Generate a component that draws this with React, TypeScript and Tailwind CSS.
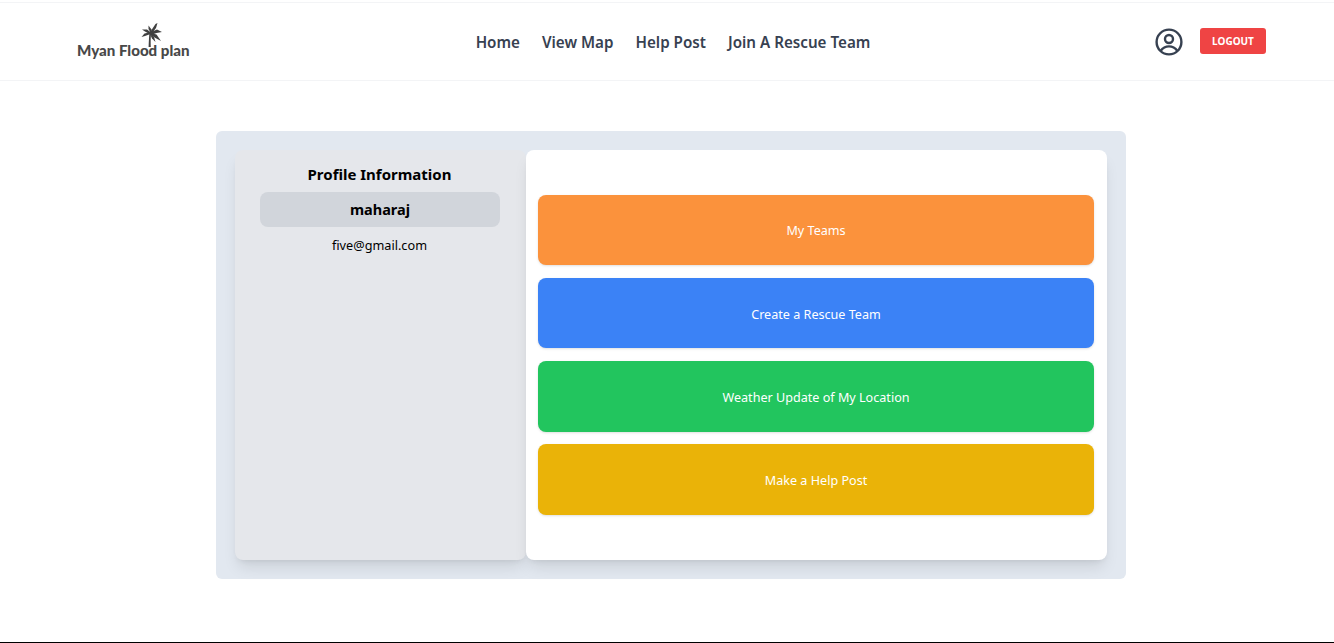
const font = { fontFamily: '"Noto Sans", "Open Sans", sans-serif' };

function Palm() {
  return (
    <svg viewBox="0 0 28 28" className="absolute left-[59px] top-[-17px] h-[28px] w-[28px]" fill="#404040">
      <path d="M12.6 25 C12.8 20 13 15 13.4 11 L15 11.5 C14.6 16 14.6 21 14.8 25 Z" />
      <path d="M13.5 11 L19.5 2 L21.5 1 L20 6 L15.5 12 Z" />
      <path d="M14 10.5 L21 7.5 L26 10 L20.5 11 L15 13 Z" />
      <path d="M14.5 11 L20.5 12.5 L25 19 L19.5 16 L14.5 13 Z" />
      <path d="M14 12 L18 15 L19.5 20 L16 16.5 Z" />
      <path d="M14.5 12 L9 14 L5.5 15 L8.5 11.5 L13 10.5 Z" />
      <path d="M14.5 12.5 L9 9.5 L6 7.5 L11 7.5 L15 10.5 Z" />
      <path d="M15 11.5 L12.5 7 L12.5 3.5 L15.5 7.5 Z" />
    </svg>
  );
}

function UserIcon() {
  return (
    <svg viewBox="0 0 28 28" className="h-[28px] w-[28px] text-[#374151]" fill="none" stroke="currentColor" strokeWidth="2.4">
      <circle cx="14" cy="14" r="12.4" />
      <circle cx="14" cy="11" r="4" />
      <path d="M5.6 23 C8 19.6 10.8 18.4 14 18.4 C17.2 18.4 20 19.6 22.4 23" />
    </svg>
  );
}

const actions = [
  { label: "My Teams", color: "bg-[#fb923c]", h: "h-[70px]", mb: "mb-[13px]", pt: "pt-[3px]" },
  { label: "Create a Rescue Team", color: "bg-[#3b82f6]", h: "h-[70px]", mb: "mb-[13px]", pt: "pt-[5px]" },
  { label: "Weather Update of My Location", color: "bg-[#22c55e]", h: "h-[71px]", mb: "mb-[12px]", pt: "pt-[3px]" },
  { label: "Make a Help Post", color: "bg-[#eab308]", h: "h-[71px]", mb: "", pt: "pt-[3px]" },
];

export default function App() {
  return (
    <div style={font} className="flex h-[643px] flex-col overflow-hidden border-b border-black bg-white">
      <header className="mt-[2px] flex h-[79px] shrink-0 items-center justify-between border-y border-gray-100 pl-[77px] pr-[68px]">
        <div className="relative mt-[17px] h-[22px] w-[113px]">
          <span style={{ fontFamily: '"Lato", sans-serif' }} className="relative block whitespace-nowrap text-[15.1px] font-black leading-[22px] text-[#484848]">
            Myan Flood plan
          </span>
          <Palm />
        </div>
        <nav className="ml-[1px] flex items-center gap-[22px] pt-[1px] text-[15.2px] font-semibold text-[#374151]">
          <a>Home</a>
          <a>View Map</a>
          <a>Help Post</a>
          <a>Join A Rescue Team</a>
        </nav>
        <div className="flex items-center gap-[17px]">
          <UserIcon />
          <button className="mb-[1px] h-[26px] w-[66px] rounded-[3px] bg-[#ef4444] text-[10px] font-bold text-white">LOGOUT</button>
        </div>
      </header>
      <main className="flex flex-1 items-start justify-center pl-[8px] pt-[50px]">
        <div className="flex h-[448px] w-[910px] rounded-md bg-[#e2e8f0] p-[19px]">
          <section className="flex w-[291px] flex-col items-center rounded-lg bg-[#e5e7eb] pr-[2px] pt-[12px] text-black shadow-lg">
            <h2 className="text-[15px] font-bold leading-[24px]">Profile Information</h2>
            <div className="mt-[6px] flex h-[35px] w-[240px] items-center justify-center rounded-lg bg-[#d1d5db] pl-[1px] text-[14.5px] font-bold">maharaj</div>
            <p className="mt-[8px] text-[12.7px] leading-[20px]">five@gmail.com</p>
          </section>
          <section className="flex flex-1 flex-col rounded-lg bg-white pl-[12px] pr-[13px] pt-[45px] shadow-lg">
            {actions.map((a) => (
              <button key={a.label} className={`${a.color} ${a.h} ${a.mb} ${a.pt} w-full rounded-lg text-[12.6px] text-white shadow-sm`}>
                {a.label}
              </button>
            ))}
          </section>
        </div>
      </main>
    </div>
  );
}
